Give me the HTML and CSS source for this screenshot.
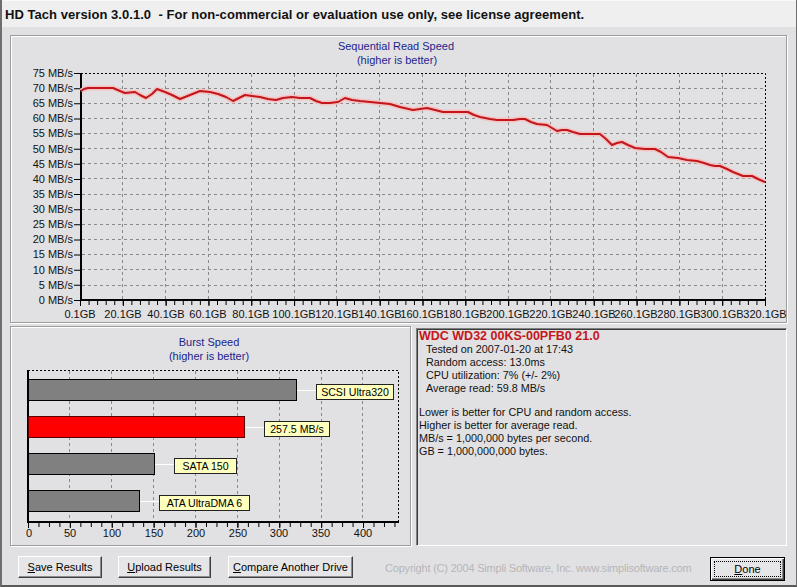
FILE: index.html
```html
<!DOCTYPE html>
<html>
<head>
<meta charset="utf-8">
<title>HD Tach</title>
<link rel="stylesheet" href="styles.css">
</head>
<body>
<div class="window">
  <div class="titlebar">HD Tach version 3.0.1.0&nbsp; - For non-commercial or evaluation use only, see license agreement.</div>

  <div class="panel top-panel">
    <svg class="chart" width="775" height="286" viewBox="11 36 775 286">
      <text class="ctitle" x="396" y="50" text-anchor="middle">Sequential Read Speed</text>
      <text class="ctitle" x="397" y="64" text-anchor="middle">(higher is better)</text>

      <g class="grid">
        <line x1="82" x2="765" y1="88.5" y2="88.5"/>
        <line x1="82" x2="765" y1="103.5" y2="103.5"/>
        <line x1="82" x2="765" y1="118.5" y2="118.5"/>
        <line x1="82" x2="765" y1="133.5" y2="133.5"/>
        <line x1="82" x2="765" y1="148.5" y2="148.5"/>
        <line x1="82" x2="765" y1="163.5" y2="163.5"/>
        <line x1="82" x2="765" y1="178.5" y2="178.5"/>
        <line x1="82" x2="765" y1="194.5" y2="194.5"/>
        <line x1="82" x2="765" y1="209.5" y2="209.5"/>
        <line x1="82" x2="765" y1="224.5" y2="224.5"/>
        <line x1="82" x2="765" y1="239.5" y2="239.5"/>
        <line x1="82" x2="765" y1="254.5" y2="254.5"/>
        <line x1="82" x2="765" y1="269.5" y2="269.5"/>
        <line x1="82" x2="765" y1="285.5" y2="285.5"/>
        <line y1="74" y2="299" x1="122.5" x2="122.5"/>
        <line y1="74" y2="299" x1="165.5" x2="165.5"/>
        <line y1="74" y2="299" x1="208.5" x2="208.5"/>
        <line y1="74" y2="299" x1="251.5" x2="251.5"/>
        <line y1="74" y2="299" x1="294.5" x2="294.5"/>
        <line y1="74" y2="299" x1="336.5" x2="336.5"/>
        <line y1="74" y2="299" x1="379.5" x2="379.5"/>
        <line y1="74" y2="299" x1="422.5" x2="422.5"/>
        <line y1="74" y2="299" x1="465.5" x2="465.5"/>
        <line y1="74" y2="299" x1="508.5" x2="508.5"/>
        <line y1="74" y2="299" x1="550.5" x2="550.5"/>
        <line y1="74" y2="299" x1="593.5" x2="593.5"/>
        <line y1="74" y2="299" x1="636.5" x2="636.5"/>
        <line y1="74" y2="299" x1="679.5" x2="679.5"/>
        <line y1="74" y2="299" x1="722.5" x2="722.5"/>
      </g>
      <path class="frame" d="M81 73.5 H765.5 V300"/>
      <line class="axis" x1="81" y1="73" x2="81" y2="301"/>
      <line class="axis" x1="80" y1="300" x2="766" y2="300"/>
      <line class="tick" x1="77" y1="73" x2="77" y2="301" stroke-width="6" stroke-dasharray="1 14.133"/>
      <line class="tick" x1="80" y1="303" x2="767" y2="303" stroke-width="4" stroke-dasharray="1 7.5625"/>
      <line class="tick" x1="80" y1="303" x2="767" y2="303" stroke-width="6" stroke-dasharray="1 41.8125"/>

      <polyline class="glow" points="81,91 84,89 88,88 113,88 120,91 125,93 135,92 140,95 146,98 152,94 157,89 165,92 172,95 180,99 190,95 200,91 210,92 218,94 226,97 233,101 239,98 245,95 252,96 260,97 268,99 276,100 283,98 292,97 300,98 310,98 316,101 322,103 330,103 338,102 345,98 352,100 360,101 370,102 380,103 390,104 400,107 413,110 420,109 427,108 435,110 443,112 455,112 468,112 474,115 480,117 490,119 497,120 505,120 513,120 520,119 525,119 531,122 537,124 547,125 552,128 557,131 562,130 567,130 573,132 580,134 590,134 600,134 606,139 612,145 617,143 622,142 628,145 635,148 645,149 655,149 661,152 668,157 678,158 687,160 697,161 704,163 710,165 715,166 720,166 727,169 733,172 738,174 743,176 752,176 758,179 765,182"/>
      <polyline class="speed" points="81,91 84,89 88,88 113,88 120,91 125,93 135,92 140,95 146,98 152,94 157,89 165,92 172,95 180,99 190,95 200,91 210,92 218,94 226,97 233,101 239,98 245,95 252,96 260,97 268,99 276,100 283,98 292,97 300,98 310,98 316,101 322,103 330,103 338,102 345,98 352,100 360,101 370,102 380,103 390,104 400,107 413,110 420,109 427,108 435,110 443,112 455,112 468,112 474,115 480,117 490,119 497,120 505,120 513,120 520,119 525,119 531,122 537,124 547,125 552,128 557,131 562,130 567,130 573,132 580,134 590,134 600,134 606,139 612,145 617,143 622,142 628,145 635,148 645,149 655,149 661,152 668,157 678,158 687,160 697,161 704,163 710,165 715,166 720,166 727,169 733,172 738,174 743,176 752,176 758,179 765,182"/>

      <g class="ylab">
        <text x="73" y="77">75 MB/s</text>
        <text x="73" y="92">70 MB/s</text>
        <text x="73" y="107">65 MB/s</text>
        <text x="73" y="122">60 MB/s</text>
        <text x="73" y="137">55 MB/s</text>
        <text x="73" y="153">50 MB/s</text>
        <text x="73" y="168">45 MB/s</text>
        <text x="73" y="183">40 MB/s</text>
        <text x="73" y="198">35 MB/s</text>
        <text x="73" y="213">30 MB/s</text>
        <text x="73" y="228">25 MB/s</text>
        <text x="73" y="243">20 MB/s</text>
        <text x="73" y="258">15 MB/s</text>
        <text x="73" y="274">10 MB/s</text>
        <text x="73" y="289">5 MB/s</text>
        <text x="73" y="304">0 MB/s</text>
      </g>
      <g class="xlab">
        <text x="80" y="318">0.1GB</text>
        <text x="123" y="318">20.1GB</text>
        <text x="166" y="318">40.1GB</text>
        <text x="208" y="318">60.1GB</text>
        <text x="251" y="318">80.1GB</text>
        <text x="294" y="318">100.1GB</text>
        <text x="337" y="318">120.1GB</text>
        <text x="380" y="318">140.1GB</text>
        <text x="422" y="318">160.1GB</text>
        <text x="465" y="318">180.1GB</text>
        <text x="508" y="318">200.1GB</text>
        <text x="551" y="318">220.1GB</text>
        <text x="594" y="318">240.1GB</text>
        <text x="636" y="318">260.1GB</text>
        <text x="679" y="318">280.1GB</text>
        <text x="722" y="318">300.1GB</text>
        <text x="765" y="318">320.1GB</text>
      </g>
    </svg>
  </div>

  <div class="lower">
    <div class="panel burst-panel">
      <svg class="chart" width="399" height="218" viewBox="11 327 399 218">
        <text class="ctitle" x="209" y="346" text-anchor="middle">Burst Speed</text>
        <text class="ctitle" x="209" y="360" text-anchor="middle">(higher is better)</text>
        <g class="grid">
          <line x1="69.5" x2="69.5" y1="371" y2="521"/>
          <line x1="111.5" x2="111.5" y1="371" y2="521"/>
          <line x1="153.5" x2="153.5" y1="371" y2="521"/>
          <line x1="195.5" x2="195.5" y1="371" y2="521"/>
          <line x1="237.5" x2="237.5" y1="371" y2="521"/>
          <line x1="279.5" x2="279.5" y1="371" y2="521"/>
          <line x1="321.5" x2="321.5" y1="371" y2="521"/>
          <line x1="362.5" x2="362.5" y1="371" y2="521"/>
        </g>
        <path class="frame" d="M28 370.5 H398.5 V522"/>
        <line class="axis" x1="28" y1="370" x2="28" y2="523"/>
        <line class="axis" x1="27" y1="522" x2="399" y2="522"/>
        <line class="tick" x1="28" y1="525" x2="399" y2="525" stroke-width="4" stroke-dasharray="1 9.47"/>
        <line class="tick" x1="28" y1="525" x2="399" y2="525" stroke-width="6" stroke-dasharray="1 40.875"/>

        <line class="connector" x1="296" y1="390.5" x2="316" y2="390.5"/>
        <line class="connector" x1="244" y1="427.5" x2="264" y2="427.5"/>
        <line class="connector" x1="154" y1="464.5" x2="174" y2="464.5"/>
        <line class="connector" x1="139" y1="501.5" x2="159" y2="501.5"/>

        <rect class="bar" x="28.5" y="379.5" width="268" height="21"/>
        <rect class="bar bar-red" x="28.5" y="416.5" width="216" height="21"/>
        <rect class="bar" x="28.5" y="453.5" width="126" height="21"/>
        <rect class="bar" x="28.5" y="490.5" width="111" height="21"/>

        <rect class="tag" x="316.5" y="384.5" width="77" height="15"/>
        <rect class="tag" x="264.5" y="421.5" width="65" height="15"/>
        <rect class="tag" x="174.5" y="458.5" width="62" height="15"/>
        <rect class="tag" x="159.5" y="495.5" width="90" height="15"/>
        <g class="taglab">
          <text x="355" y="396">SCSI Ultra320</text>
          <text x="297" y="433">257.5 MB/s</text>
          <text x="205.5" y="470">SATA 150</text>
          <text x="204.5" y="507">ATA UltraDMA 6</text>
        </g>
        <g class="xlab">
          <text x="29" y="537">0</text>
          <text x="70" y="537">50</text>
          <text x="112" y="537">100</text>
          <text x="154" y="537">150</text>
          <text x="196" y="537">200</text>
          <text x="238" y="537">250</text>
          <text x="279" y="537">300</text>
          <text x="321" y="537">350</text>
          <text x="363" y="537">400</text>
        </g>
      </svg>
    </div>

    <div class="info">
      <div class="drive">WDC WD32 00KS-00PFB0 21.0</div>
      <div class="stat">Tested on 2007-01-20 at 17:43</div>
      <div class="stat">Random access: 13.0ms</div>
      <div class="stat">CPU utilization: 7% (+/- 2%)</div>
      <div class="stat">Average read: 59.8 MB/s</div>
      <div class="notes">
        <div>Lower is better for CPU and random access.</div>
        <div>Higher is better for average read.</div>
        <div>MB/s = 1,000,000 bytes per second.</div>
        <div>GB = 1,000,000,000 bytes.</div>
      </div>
    </div>
  </div>

  <div class="actions">
    <button class="btn btn-save"><u>S</u>ave Results</button>
    <button class="btn btn-upload"><u>U</u>pload Results</button>
    <button class="btn btn-compare"><u>C</u>ompare Another Drive</button>
    <span class="copyright">Copyright (C) 2004 Simpli Software, Inc. www.simplisoftware.com</span>
    <button class="btn btn-done"><span class="focus"><u>D</u>one</span></button>
  </div>
</div>
</body>
</html>
```

FILE: styles.css
```css
* { box-sizing: border-box; }

html, body {
  margin: 0;
  padding: 0;
  background: #e1e1e3;
}

.window {
  width: 797px;
  height: 587px;
  background: #e1e1e3;
  border-left: 2px solid #6e6e6e;
  border-right: 1px solid #6e6e6e;
  border-bottom: 2px solid #5a5a5a;
  display: flex;
  flex-direction: column;
  font-family: "Liberation Sans", Arial, sans-serif;
  font-size: 11px;
  color: #000;
  overflow: hidden;
}

.titlebar {
  height: 27px;
  flex: none;
  background: #efeff0;
  border-top: 1px solid #f8f8f8;
  padding: 6px 0 0 3px;
  font-family: "Liberation Sans", Arial, sans-serif;
  font-weight: bold;
  font-size: 13px;
  line-height: 16px;
  letter-spacing: 0.05px;
  color: #111;
  white-space: pre;
}

.panel {
  border: 1px solid #9d9d9d;
  box-shadow: 1px 1px 0 #ffffff, inset 1px 1px 0 #ffffff;
}

.top-panel {
  flex: none;
  margin: 8px 0 0 8px;
  width: 777px;
  height: 288px;
}

.chart {
  display: block;
}

.chart text {
  font-family: "Liberation Sans", Arial, sans-serif;
  font-size: 11px;
}

.ctitle { fill: #1e1e8c; }

.ylab text { text-anchor: end; fill: #111; }
.xlab text { text-anchor: middle; fill: #111; }

.grid line {
  stroke: #8a8a8a;
  stroke-width: 1;
  stroke-dasharray: 3 3;
}

.frame {
  fill: none;
  stroke: #000;
  stroke-width: 1;
  stroke-dasharray: 2 2;
}

.axis {
  stroke: #000;
  stroke-width: 2;
}

.tick { stroke: #000; }

.glow {
  fill: none;
  stroke: #f5c2c2;
  stroke-width: 5;
  stroke-linejoin: round;
}

.speed {
  fill: none;
  stroke: #c0161c;
  stroke-width: 2;
  stroke-linejoin: round;
}

.lower {
  flex: none;
  display: flex;
  align-items: flex-start;
  gap: 5px;
  margin: 3px 0 0 8px;
}

.burst-panel {
  width: 401px;
  height: 220px;
}

.bar {
  fill: #808080;
  stroke: #000;
  stroke-width: 1;
}

.bar-red { fill: #ff0000; stroke: #5a0000; }

.connector {
  stroke: #ffffff;
  stroke-width: 1;
}

.tag {
  fill: #ffffbe;
  stroke: #222;
  stroke-width: 1;
}

.taglab text {
  text-anchor: middle;
  fill: #000;
  font-size: 10.6px;
}

.info {
  margin-top: 2px;
  width: 371px;
  height: 218px;
  background: #e1e1e3;
  border-top: 1px solid #808080;
  border-left: 1px solid #808080;
  border-right: 1px solid #ffffff;
  border-bottom: 1px solid #ffffff;
  box-shadow: inset 1px 1px 0 #3a3a3a;
  padding: 1px 0 0 2px;
  line-height: 13px;
  font-size: 10.8px;
  color: #111;
}

.drive {
  color: #c4161c;
  font-weight: bold;
  font-size: 12.5px;
  line-height: 13px;
}

.stat { padding-left: 7px; }

.notes { margin-top: 11px; }

.actions {
  flex: none;
  display: flex;
  align-items: flex-start;
  margin: 10px 0 0 16px;
}

.btn {
  height: 22px;
  padding: 0;
  background: #e6e6e8;
  border-top: 1px solid #ffffff;
  border-left: 1px solid #ffffff;
  border-right: 1px solid #404040;
  border-bottom: 1px solid #404040;
  box-shadow: inset -1px -1px 0 #8c8c8c;
  font-family: "Liberation Sans", Arial, sans-serif;
  font-size: 11px;
  color: #000;
  line-height: 18px;
}

.btn-save { width: 84px; }
.btn-upload { width: 93px; margin-left: 16px; }
.btn-compare { width: 125px; margin-left: 17px; }

.copyright {
  margin: 5px 0 0 32px;
  width: 325px;
  color: #b6b6b8;
  font-size: 11px;
  line-height: 14px;
  letter-spacing: -0.2px;
}

.btn-done {
  width: 75px;
  height: 24px;
  margin-top: 1px;
  border: 1px solid #000;
  box-shadow: inset 1px 1px 0 #ffffff, inset -1px -1px 0 #404040, inset -2px -2px 0 #8c8c8c;
  padding: 3px;
}

.focus {
  display: block;
  height: 16px;
  border: 1px dotted #000;
  line-height: 14px;
}
```
